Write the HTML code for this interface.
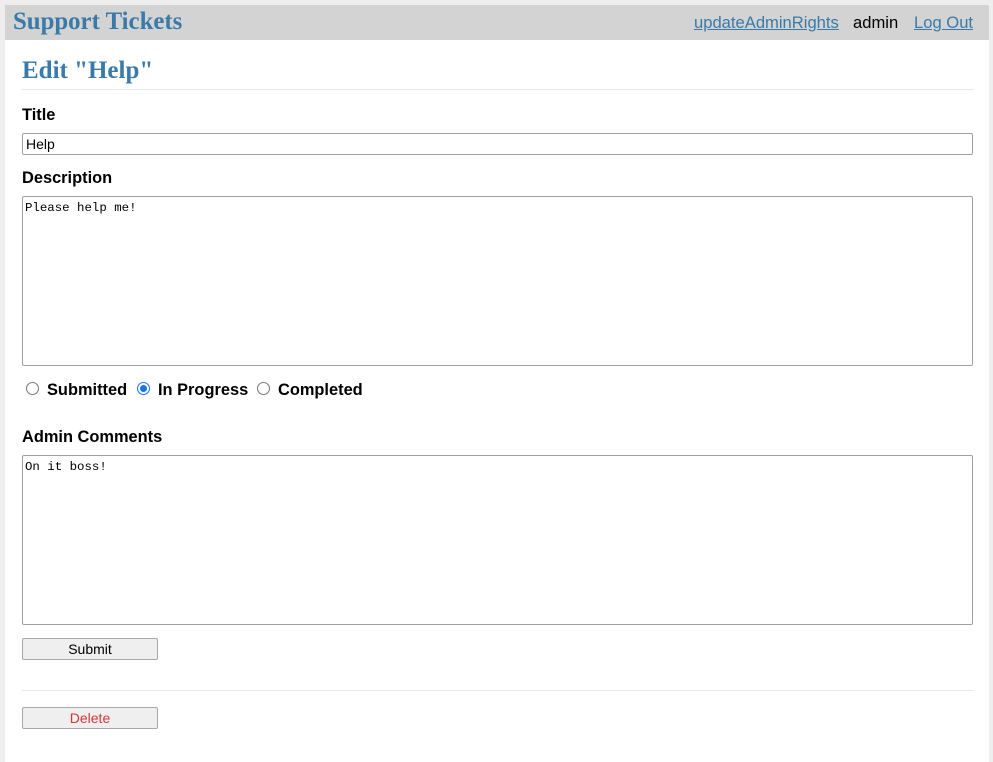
<!DOCTYPE html>
<html><head><style>
html,body{margin:0;padding:0;width:993px;height:762px;overflow:hidden;background:#eeeeee;font-family:"Liberation Sans",Arial,sans-serif;}
.panel{position:absolute;left:5px;top:5px;width:984px;height:757px;background:#fff;}
.hdr{position:absolute;left:5px;top:5px;width:984px;height:35px;background:#d3d3d3;}
.a{position:absolute;}
.brand{left:13px;top:8px;font-family:"Liberation Serif",serif;font-weight:bold;font-size:24.8px;color:#3a7aa8;}
.nav{top:13px;font-size:16.6px;}
.link{color:#3a7aa8;text-decoration:underline;}
h1{position:absolute;left:22px;top:57px;margin:0;font-family:"Liberation Serif",serif;font-size:25px;color:#3a7aa8;}
.hr{position:absolute;left:22px;width:951px;height:1px;background:#e6e6e6;}
.lbl{position:absolute;left:22px;font-weight:bold;font-size:16.4px;color:#000;}
.box{position:absolute;left:22px;width:951px;border:1px solid #a0a0a0;border-radius:2px;background:#fff;font-size:14px;box-sizing:border-box;}
.mono{font-family:"Liberation Mono",monospace;font-size:12.4px;padding:4px 2px;}
.radio{position:absolute;width:11px;height:11px;border:1px solid #767676;border-radius:50%;top:382px;}
.rl{position:absolute;top:381px;font-weight:bold;font-size:16.4px;}
.btn{position:absolute;left:22px;width:136px;height:22px;background:#efefef;border:1px solid #a8a8a8;border-radius:2px;box-sizing:border-box;text-align:center;font-size:14px;line-height:20px;}
</style></head><body>
<div class="panel"></div>
<div class="hdr"></div>
<div class="a brand">Support Tickets</div>
<div class="a nav link" style="left:694px;">updateAdminRights</div>
<div class="a nav" style="left:853px;color:#000;">admin</div>
<div class="a nav link" style="left:914px;">Log Out</div>
<h1>Edit "Help"</h1>
<div class="hr" style="top:89px;"></div>
<div class="lbl" style="top:106px;">Title</div>
<div class="box" style="top:133px;height:22px;padding:2px 3px;line-height:16px;">Help</div>
<div class="lbl" style="top:169px;">Description</div>
<div class="box mono" style="top:196px;height:170px;">Please help me!</div>
<div class="radio" style="left:26px;"></div>
<div class="rl" style="left:47px;">Submitted</div>
<div class="radio" style="left:137px;border-color:#1a73e8;background:#fff;"><div style="position:absolute;left:2px;top:2px;width:7px;height:7px;border-radius:50%;background:#1a73e8;"></div></div>
<div class="rl" style="left:158px;">In Progress</div>
<div class="radio" style="left:257px;"></div>
<div class="rl" style="left:278px;">Completed</div>
<div class="lbl" style="top:428px;">Admin Comments</div>
<div class="box mono" style="top:455px;height:170px;">On it boss!</div>
<div class="btn" style="top:638px;color:#000;">Submit</div>
<div class="hr" style="top:690px;"></div>
<div class="btn" style="top:707px;color:#d0393b;">Delete</div>
</body></html>
